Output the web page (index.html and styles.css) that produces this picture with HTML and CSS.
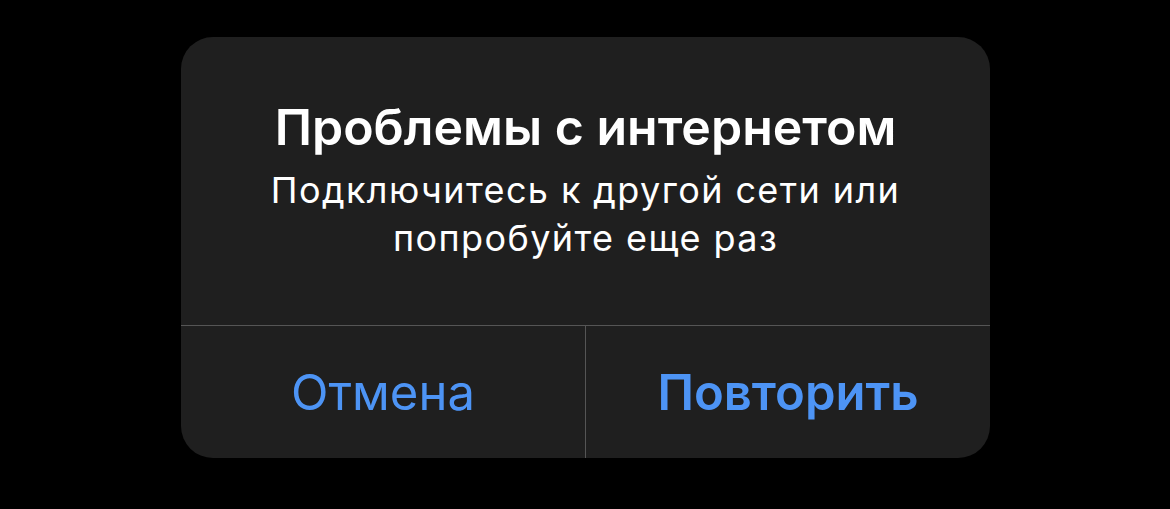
FILE: index.html
```html
<!DOCTYPE html>
<html lang="ru">
<head>
<meta charset="UTF-8">
<meta name="viewport" content="width=device-width, initial-scale=1.0">
<title>Проблемы с интернетом</title>
<link rel="stylesheet" href="styles.css">
</head>
<body>

<div class="alert">
    <div class="alert-body">
        <div class="alert-title">Проблемы с интернетом</div>
        <div class="alert-message">Подключитесь к другой сети или<br>попробуйте еще раз</div>
    </div>
    <div class="alert-actions">
        <button class="alert-btn">Отмена</button>
        <button class="alert-btn primary">Повторить</button>
    </div>
</div>

</body>
</html>
```

FILE: styles.css
```css
html, body {
    margin: 0;
    height: 100%;
    background: #000;
}

body {
    display: flex;
    justify-content: center;
    padding-top: 37px;
    box-sizing: border-box;
    font-family: 'Inter', 'Roboto', sans-serif;
}

/* Dialog card */
.alert {
    width: 809px;
    height: 421px;
    margin-left: 1px;
    background: #1f1f1f;
    border-radius: 32px;
    overflow: hidden;
    display: flex;
    flex-direction: column;
}

.alert-body {
    height: 288px;
    box-sizing: border-box;
    padding-top: 60px;
    text-align: center;
    color: #fff;
}

.alert-title {
    font-size: 50px;
    font-weight: 600;
    line-height: 60px;
}

.alert-message {
    margin-top: 9px;
    font-size: 36px;
    line-height: 48px;
    letter-spacing: 1.4px;
}

/* Button row */
.alert-actions {
    flex: 1;
    display: flex;
    border-top: 1px solid #555;
}

.alert-btn {
    flex: 1;
    background: none;
    border: none;
    padding: 0;
    font-family: inherit;
    font-size: 49px;
    color: #4d94f5;
}

.alert-btn + .alert-btn {
    border-left: 1px solid #555;
}

.alert-btn.primary {
    font-weight: 600;
}
```
